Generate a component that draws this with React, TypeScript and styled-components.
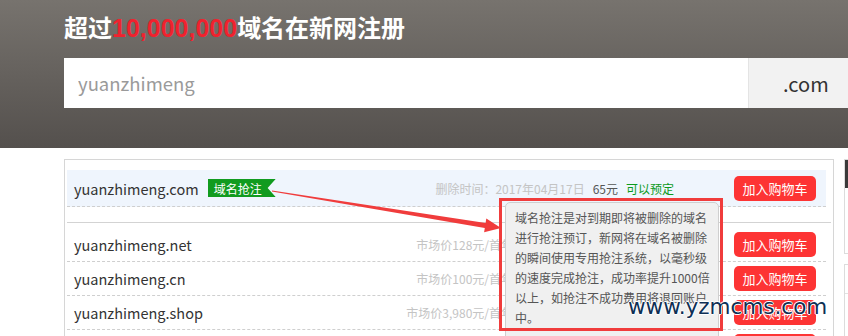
import React from 'react';
import styled, { createGlobalStyle } from 'styled-components';

const GlobalStyle = createGlobalStyle`
  html, body {
    margin: 0;
    padding: 0;
    background: #fff;
    overflow: hidden;
  }
  body {
    font-family: "Noto Sans CJK SC", "Noto Sans", sans-serif;
  }
  * {
    box-sizing: border-box;
  }
`;

const Page = styled.div`
  position: relative;
  width: 848px;
  height: 336px;
  overflow: hidden;
`;

const Hero = styled.header`
  height: 148px;
  padding: 12px 0 0 64px;
  background: linear-gradient(to bottom, #77736e 0%, #54504d 100%);
`;

const Title = styled.h1`
  margin: 0;
  font-family: "Noto Sans CJK SC", "Noto Sans", sans-serif;
  font-size: 24px;
  line-height: 30px;
  font-weight: 700;
  color: #fff;

  em {
    font-family: "Liberation Sans", Arial, sans-serif;
    font-size: 25px;
    font-style: normal;
    color: #f0222e;
  }
`;

const SearchBar = styled.div`
  display: flex;
  width: 808px;
  height: 50px;
  margin-top: 15px;
`;

const SearchInput = styled.input`
  width: 684px;
  height: 50px;
  border: 0;
  outline: none;
  padding: 0 14px;
  font-family: inherit;
  font-size: 18.5px;
  color: #333;
  background: #fff;

  &::placeholder {
    color: #9a9a9a;
  }
`;

const Suffix = styled.div`
  flex: 1;
  display: flex;
  align-items: center;
  padding-left: 34px;
  background: #f2f2f2;
  border-left: 1px solid #e4e4e4;
  font-size: 20px;
  color: #333;
`;

const Main = styled.main`
  display: flex;
  gap: 10px;
  padding: 11px 0 0 64px;
`;

const Panel = styled.section`
  flex: none;
  width: 770px;
  height: 240px;
  border: 1px solid #d6d6d6;
  border-bottom: 0;
  padding: 10px 7px 0 2px;
`;

const Row = styled.div<{ $featured?: boolean }>`
  display: flex;
  align-items: center;
  height: ${({ $featured }) => ($featured ? 37 : 34)}px;
  padding: 0 10px 0 7px;
  background: ${({ $featured }) => ($featured ? '#eff5fd' : 'transparent')};
  border-bottom: 1px dashed #cfcfcf;
`;

const Divider = styled.div`
  height: 1px;
  margin: 15px -5px 5px 0;
  background: #d3d3d3;
`;

const Domain = styled.span`
  font-size: 14.5px;
  color: #333;
`;

const Badge = styled.span`
  display: inline-flex;
  align-items: center;
  height: 18px;
  width: 68px;
  margin-left: 9px;
  padding-left: 6px;
  background: #119b1f;
  color: #fff;
  font-size: 12px;
  clip-path: polygon(0 0, 100% 0, calc(100% - 8px) 50%, 100% 100%, 0 100%);
`;

const Spacer = styled.div`
  flex: 1;
`;

const Meta = styled.div`
  display: flex;
  align-items: center;
  gap: 8px;
  margin-right: 60px;
  font-size: 12px;
  white-space: nowrap;
`;

const Muted = styled.span`
  color: #c4c4c4;
`;

const Price = styled.span`
  color: #555;
`;

const Status = styled.span`
  color: #0c9a1c;
`;

const Offer = styled.div`
  display: flex;
  justify-content: flex-end;
  gap: 8px;
  width: 153px;
`;

const CartButton = styled.button`
  flex: none;
  width: 82px;
  height: 25px;
  border: 0;
  border-radius: 5px;
  background: #fd3434;
  color: #fff;
  font-family: inherit;
  font-size: 13px;
  padding: 0;
  cursor: pointer;
`;

const Sidebar = styled.aside`
  flex: none;
  width: 200px;
  display: flex;
  flex-direction: column;
  gap: 10px;
`;

const SideBox = styled.div<{ $height: number }>`
  height: ${({ $height }) => $height}px;
  border: 1px solid #dcdcdc;
`;

const SideHead = styled.div`
  height: 28px;
  background: #3a3a3a;
`;

const SideLine = styled.div`
  height: 29px;
  border-bottom: 1px solid #e2e2e2;
`;

const Tooltip = styled.div`
  position: absolute;
  left: 505px;
  top: 202px;
  width: 214px;
  height: 150px;
  padding: 5px 0 0 9px;
  background: #f0f0f0;
  border: 1px solid #cfcfcf;
  border-radius: 5px;
  font-size: 12px;
  line-height: 20px;
  color: #555;
  white-space: nowrap;
`;

const Highlight = styled.div`
  position: absolute;
  left: 499px;
  top: 198px;
  width: 224px;
  height: 133px;
  border: 3px solid #f03c3c;
`;

const ArrowLayer = styled.svg`
  position: absolute;
  left: 0;
  top: 0;
  pointer-events: none;
`;

const Watermark = styled.div`
  position: absolute;
  left: 628px;
  top: 296px;
  font-family: "DejaVu Sans", Verdana, sans-serif;
  font-size: 21.5px;
  line-height: 22px;
  color: #0e2f55;
  text-shadow: 1px 0 #fff, -1px 0 #fff, 0 1px #fff, 0 -1px #fff;
  white-space: nowrap;
`;

const others = [
  { name: 'yuanzhimeng.net', market: '市场价128元/首年', price: '55元' },
  { name: 'yuanzhimeng.cn', market: '市场价100元/首年', price: '29元' },
  { name: 'yuanzhimeng.shop', market: '市场价3,980元/首年', price: '35元' },
  { name: 'yuanzhimeng.xyz', market: '市场价88元/首年', price: '9元' },
];

const tipLines = [
  '域名抢注是对到期即将被删除的域名',
  '进行抢注预订，新网将在域名被删除',
  '的瞬间使用专用抢注系统，以毫秒级',
  '的速度完成抢注，成功率提升1000倍',
  '以上，如抢注不成功费用将退回账户',
  '中。',
];

export default function App() {
  return (
    <Page>
      <GlobalStyle />
      <Hero>
        <Title>
          超过<em>10,000,000</em>域名在新网注册
        </Title>
        <SearchBar>
          <SearchInput placeholder="yuanzhimeng" />
          <Suffix>.com</Suffix>
        </SearchBar>
      </Hero>

      <Main>
        <Panel>
          <Row $featured>
            <Domain>yuanzhimeng.com</Domain>
            <Badge>域名抢注</Badge>
            <Spacer />
            <Meta>
              <Muted>删除时间：2017年04月17日</Muted>
              <Price>65元</Price>
              <Status>可以预定</Status>
            </Meta>
            <CartButton>加入购物车</CartButton>
          </Row>
          <Divider />
          {others.map((d) => (
            <Row key={d.name}>
              <Domain>{d.name}</Domain>
              <Spacer />
              <Meta>
                <Muted>{d.market}</Muted>
                <Offer>
                  <Price>{d.price}</Price>
                  <Status>可以注册</Status>
                </Offer>
              </Meta>
              <CartButton>加入购物车</CartButton>
            </Row>
          ))}
        </Panel>
        <Sidebar>
          <SideBox $height={95}>
            <SideHead />
          </SideBox>
          <SideBox $height={120}>
            <SideLine />
          </SideBox>
        </Sidebar>
      </Main>

      <ArrowLayer width="848" height="336" viewBox="0 0 848 336">
        <polygon
          points="272,190.4 485.6,223 486.3,218.5 501,228 484.1,232.3 484.8,227.9 271.9,191.6"
          fill="#f03c3c"
        />
      </ArrowLayer>

      <Tooltip>
        {tipLines.map((line) => (
          <div key={line}>{line}</div>
        ))}
      </Tooltip>
      <Highlight />
      <Watermark>www.yzmcms.com</Watermark>
    </Page>
  );
}
